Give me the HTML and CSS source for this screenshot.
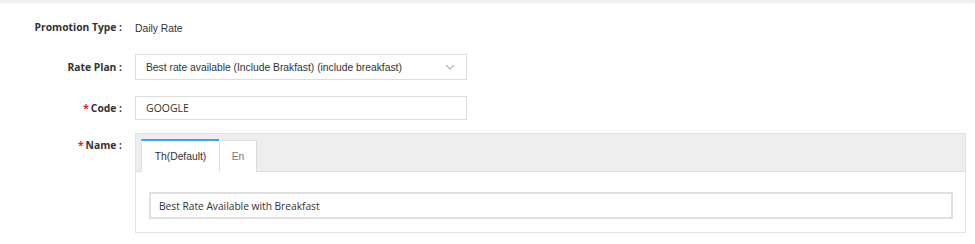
FILE: index.html
```html
<!DOCTYPE html>
<html>
<head>
<meta charset="utf-8">
<link rel="stylesheet" href="styles.css">
</head>
<body>
<div class="topbar"></div>
<form class="form">
  <div class="row row-type">
    <div class="label">Promotion Type :</div>
    <div class="field"><span class="plain">Daily Rate</span></div>
  </div>
  <div class="row row-plan">
    <div class="label">Rate Plan :</div>
    <div class="field">
      <div class="select">
        <span class="select-text">Best rate available (Include Brakfast) (include breakfast)</span>
        <svg class="chev" width="10" height="6" viewBox="0 0 10 6"><path d="M1 1l4 4 4-4" fill="none" stroke="#b5b5b5" stroke-width="1.2"/></svg>
      </div>
    </div>
  </div>
  <div class="row row-code">
    <div class="label"><span class="req">*</span>Code :</div>
    <div class="field"><div class="input">GOOGLE</div></div>
  </div>
  <div class="row row-name">
    <div class="label"><span class="req">*</span>Name :</div>
    <div class="field">
      <div class="panel">
        <div class="tabs">
          <div class="tab active">Th(Default)</div>
          <div class="tab">En</div>
        </div>
        <div class="panel-body">
          <div class="input2">Best Rate Available with Breakfast</div>
        </div>
      </div>
    </div>
  </div>
</form>
</body>
</html>
```
FILE: styles.css
```css
* { box-sizing: border-box; }
html, body { margin: 0; padding: 0; background: #fff; }
body { width: 975px; height: 244px; overflow: hidden; font-family: "Liberation Sans", Arial, sans-serif; color: #333; }
.topbar { height: 3px; background: #f1f1f1; }
.form { display: flex; flex-direction: column; }
.row { display: grid; grid-template-columns: 122px 830px; column-gap: 13px; }
.label { font-family: "Open Sans", sans-serif; font-weight: 700; font-size: 10.3px; text-align: right; color: #333; }
.req { color: #f0201a; margin-right: 2px; }
.row-type { margin-top: 14px; height: 20px; align-items: center; }
.plain { font-size: 10.3px; color: #333; }
.row-plan { margin-top: 17px; align-items: center; }
.row-plan .field { width: 332px; }
.select { height: 26px; border: 1px solid #ddd; display: flex; align-items: center; justify-content: space-between; padding: 0 11px 0 10px; font-size: 10.3px; }
.row-code { margin-top: 16px; align-items: center; }
.row-code .field { width: 332px; }
.input { height: 24px; border: 1px solid #ddd; display: flex; align-items: center; padding-left: 10px; font-family: "Open Sans", sans-serif; font-size: 10.5px; color: #333; }
.row-name { margin-top: 13px; }
.row-name .label { padding-top: 5px; }
.panel { width: 831px; height: 100px; border: 1px solid #e3e3e3; }
.tabs { height: 38px; background: #eee; border-bottom: 1px solid #ddd; display: flex; align-items: flex-end; padding-left: 5px; }
.tab { height: 32px; margin-bottom: -1px; background: #fff; border: 1px solid #ddd; border-bottom: none; font-size: 10.3px; display: flex; align-items: center; justify-content: center; color: #777; }
.tab.active { width: 78px; height: 33px; border-top: 2px solid #3ca3e6; color: #333; border-right: none; }
.tab:not(.active) { width: 38px; }
.panel-body { padding: 20px 12px 0 13px; }
.input2 { height: 27px; border: 2px solid #e0e0e0; display: flex; align-items: center; padding-left: 8px; font-family: "Open Sans", sans-serif; font-size: 10.2px; color: #333; }
```
